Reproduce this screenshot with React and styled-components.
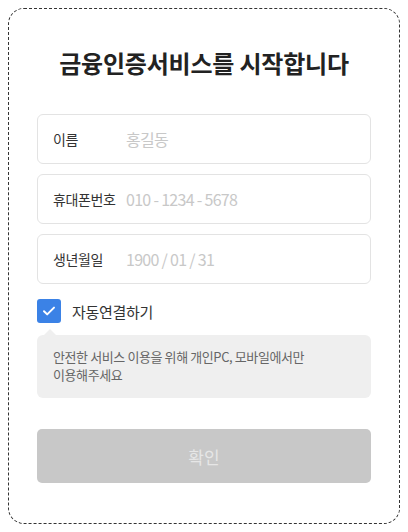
import React from "react";
import styled, { createGlobalStyle } from "styled-components";

const GlobalStyle = createGlobalStyle`
  * { box-sizing: border-box; }
  body {
    margin: 0;
    background: #fff;
    font-family: "Noto Sans CJK KR", "Noto Sans", sans-serif;
  }
`;

const Card = styled.div`
  margin: 8px;
  width: 392px;
  height: 516px;
  border: 1px dashed #333;
  border-radius: 16px;
  padding: 38px 28px 0;
  display: flex;
  flex-direction: column;
`;

const Title = styled.h1`
  margin: 0 0 35px;
  font-size: 24px;
  line-height: 32px;
  font-weight: 700;
  color: #222;
  text-align: center;
  letter-spacing: -0.2px;
`;

const Fields = styled.div`
  display: flex;
  flex-direction: column;
  gap: 10px;
`;

const Field = styled.label`
  display: flex;
  align-items: center;
  height: 50px;
  padding: 0 15px;
  border: 1px solid #e3e3e3;
  border-radius: 6px;
`;

const FieldLabel = styled.span`
  width: 73px;
  flex-shrink: 0;
  font-size: 14px;
  color: #333;
  letter-spacing: -0.4px;
`;

const FieldInput = styled.input`
  border: none;
  outline: none;
  flex: 1;
  min-width: 0;
  padding: 0;
  font-family: inherit;
  font-size: 16px;
  color: #333;
  letter-spacing: -0.7px;
  &::placeholder { color: #c8c8c8; }
`;

const CheckRow = styled.label`
  display: flex;
  align-items: center;
  gap: 11px;
  margin-top: 15px;
`;

const CheckBox = styled.span`
  width: 24px;
  height: 24px;
  border-radius: 3px;
  background: #3b82e6;
  display: flex;
  align-items: center;
  justify-content: center;
`;

const CheckText = styled.span`
  font-size: 15px;
  color: #333;
  letter-spacing: -0.3px;
`;

const Notice = styled.div`
  position: relative;
  margin-top: 12px;
  background: #efefef;
  border-radius: 6px;
  padding: 13px 16px 14px;
  font-size: 13px;
  line-height: 18px;
  color: #666;
  letter-spacing: -0.4px;

  &::before {
    content: "";
    position: absolute;
    top: -6px;
    left: 7px;
    border-left: 6px solid transparent;
    border-right: 6px solid transparent;
    border-bottom: 6px solid #efefef;
  }
`;

const Submit = styled.button`
  margin-top: 31px;
  height: 54px;
  border: none;
  border-radius: 5px;
  background: #c8c8c8;
  color: #e6e6e6;
  font-family: inherit;
  font-size: 17px;
`;

const fields = [
  { label: "이름", placeholder: "홍길동" },
  { label: "휴대폰번호", placeholder: "010 - 1234 - 5678" },
  { label: "생년월일", placeholder: "1900 / 01 / 31" },
];

export default function App() {
  return (
    <>
      <GlobalStyle />
      <Card>
        <Title>금융인증서비스를 시작합니다</Title>
        <Fields>
          {fields.map((f) => (
            <Field key={f.label}>
              <FieldLabel>{f.label}</FieldLabel>
              <FieldInput placeholder={f.placeholder} />
            </Field>
          ))}
        </Fields>
        <CheckRow>
          <CheckBox>
            <svg width="14" height="14" viewBox="0 0 14 14" fill="none">
              <path d="M2 7.2l3.2 3.2L12 3.6" stroke="#fff" strokeWidth="2" strokeLinecap="round" strokeLinejoin="round" />
            </svg>
          </CheckBox>
          <CheckText>자동연결하기</CheckText>
        </CheckRow>
        <Notice>
          안전한 서비스 이용을 위해 개인PC, 모바일에서만
          <br />
          이용해주세요
        </Notice>
        <Submit disabled>확인</Submit>
      </Card>
    </>
  );
}
